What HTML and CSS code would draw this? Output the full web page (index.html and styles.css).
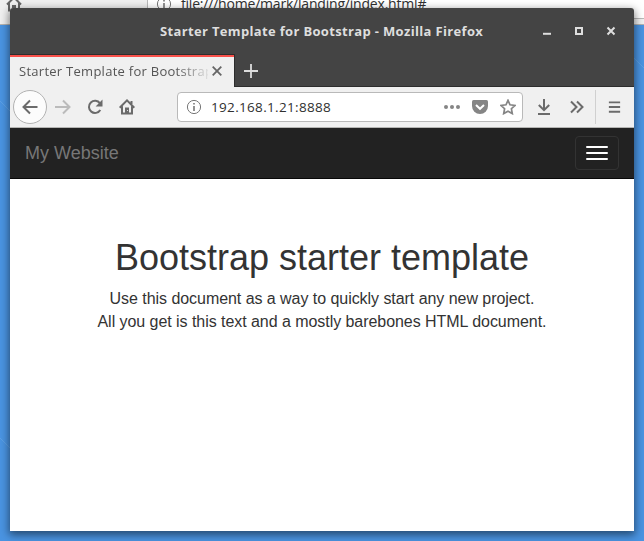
FILE: index.html
```html
<!DOCTYPE html>
<html lang="en">
<head>
<meta charset="utf-8">
<title>Starter Template for Bootstrap</title>
<link rel="stylesheet" href="styles.css">
</head>
<body>
<svg class="texture" viewBox="0 0 644 541"><path d="M0 101l11 11M0 438l12 12M632 56l12 12"/></svg>
<div class="behind">
  <svg class="behind-home" viewBox="0 0 16 16"><path d="M1 8.5 8 1.5l7 7M3 7v7.5h10V7M11.5 5V2"/><path d="M7 14v-4h2v4"/></svg>
  <div class="behind-url">
    <svg class="info" viewBox="0 0 16 16"><circle cx="8" cy="8" r="6.6"/><path d="M8 7v5M8 4v1.6"/></svg>
    <span>file:///home/mark/landing/index.html#</span>
  </div>
</div>
<main class="window">
  <header class="titlebar">
    <span class="title">Starter Template for Bootstrap - Mozilla Firefox</span>
    <svg class="controls" viewBox="0 0 74 12"><path d="M1 8.8h8"/><path d="M34 3h6v6h-6z"/><path d="m65.5 2.5 7 7m0-7-7 7"/></svg>
  </header>
  <div class="tabs">
    <div class="tab">
      <span class="tab-label">Starter Template for Bootstrap</span>
      <svg class="close" viewBox="0 0 10 10"><path d="m.7.7 8.6 8.6m0-8.6L.7 9.3"/></svg>
    </div>
    <svg class="plus" viewBox="0 0 14 14"><path d="M7 0v14M0 7h14"/></svg>
  </div>
  <nav class="toolbar">
    <span class="back"><svg class="icon" viewBox="0 0 16 16"><path d="M15.5 8H1.5M8 1.5 1.5 8 8 14.5"/></svg></span>
    <svg class="icon forward" viewBox="0 0 16 16"><path d="M0 8h14.5M8 1.5 14.5 8 8 14.5"/></svg>
    <svg class="icon reload" viewBox="0 0 16 16"><path d="M13 4.3A6.1 6.1 0 1 0 13.3 11"/><path class="fill" d="M15.5.6v7H8.6z"/></svg>
    <svg class="icon home" viewBox="0 0 16 16"><path d="M.7 8.7 8 1.4l7.3 7.3M3 7.2v7.3h10V7.2M12.5 5V2"/><path class="fill" d="M6 8.5h4V14H6z"/><path class="dot" d="M8 11h1v1H8z"/></svg>
    <div class="url">
      <svg class="info" viewBox="0 0 16 16"><circle cx="8" cy="8" r="6.6"/><path d="M8 7v5M8 4v1.6"/></svg>
      <span class="address">192.168.1.21:8888</span>
      <svg class="icon more" viewBox="0 0 16 16"><circle cx="2" cy="8" r="2"/><circle cx="8" cy="8" r="2"/><circle cx="14" cy="8" r="2"/></svg>
      <svg class="icon pocket" viewBox="0 0 16 16"><path class="fill" d="M1.5 1h13Q16 1 16 2.5V7a8 8 0 0 1-16 0V2.5Q0 1 1.5 1z"/><path class="check" d="m4 6 4 3.8L12 6"/></svg>
      <svg class="icon star" viewBox="0 0 16 16"><path d="m8 1.3 2 4.5 5 .6-3.6 3.3.9 4.9L8 12.2l-4.3 2.4.9-4.9L1 6.4l5-.6z"/></svg>
    </div>
    <svg class="icon download" viewBox="0 0 16 16"><path d="M8 0v11M2.8 6 8 11.2 13.2 6M2 15h12"/></svg>
    <svg class="icon chevrons" viewBox="0 0 16 16"><path d="m2 2.5 5.5 5.5L2 13.5m6-11L13.5 8 8 13.5"/></svg>
    <svg class="icon menu" viewBox="0 0 16 16"><path d="M2 3h12M2 8h12M2 13h12"/></svg>
  </nav>
  <section class="navbar">
    <span class="brand">My Website</span>
    <span class="toggle"><i></i><i></i><i></i></span>
  </section>
  <section class="starter">
    <h1>Bootstrap starter template</h1>
    <p>Use this document as a way to quickly start any new project.<br>All you get is this text and a mostly barebones HTML document.</p>
  </section>
</main>
</body>
</html>
```
FILE: styles.css
```css
* { box-sizing: border-box; }
body {
  margin: 0;
  width: 644px;
  height: 541px;
  overflow: hidden;
  position: relative;
  background: #4a94e2;
  font-family: "Open Sans", "Noto Sans", sans-serif;
}
svg { display: block; flex: none; fill: none; }
.texture { position: absolute; inset: 0; stroke: #5ba0e6; }
.behind {
  position: absolute;
  inset: 0 0 auto;
  height: 25px;
  background: #f0f0f0;
  border-bottom: 1px solid #b5b3b0;
}
.behind-home { position: absolute; left: 6px; top: -4px; width: 16px; height: 16px; stroke: #666; stroke-width: 2; }
.behind-url {
  position: absolute;
  left: 147px;
  right: -4px;
  top: -20px;
  height: 39px;
  border: 1px solid #b9b9b9;
  background: #fff;
  color: #303030;
  font-size: 14px;
  line-height: 20px;
}
.behind-url span { position: absolute; left: 33px; top: 13px; letter-spacing: -.2px; }
.behind-url .info { position: absolute; left: 8px; top: 15px; }
.info { width: 16px; height: 16px; stroke: #777; }
.info path { stroke-width: 1.6; }
.window {
  position: absolute;
  left: 10px;
  top: 8px;
  width: 624px;
  height: 523px;
  display: flex;
  flex-direction: column;
  background: #fff;
  border-radius: 3px 3px 0 0;
  box-shadow: 0 3px 8px 1px rgba(0,0,0,.5);
}
.titlebar {
  height: 46px;
  display: flex;
  align-items: center;
  padding: 0 18px 0 150px;
  background: #444;
  border-radius: 3px 3px 0 0;
}
.title { flex: 1; color: #dedede; font-weight: 700; font-size: 13px; letter-spacing: .34px; white-space: nowrap; }
.controls { width: 74px; height: 12px; stroke: #dedede; stroke-width: 2; }
.tabs {
  height: 33px;
  display: flex;
  align-items: center;
  background: linear-gradient(#2d2d2d, #2d2d2d) 0 100% / 100% 1px no-repeat #444;
}
.tab {
  width: 225px;
  height: 33px;
  display: flex;
  align-items: center;
  padding: 0 12px 0 9px;
  background: #f0f0f0;
  border-top: 1px solid #2d2d2d;
  border-right: 1px solid #2d2d2d;
  box-shadow: inset 0 2px #f9504a;
}
.tab-label {
  width: 189px;
  margin-right: 4px;
  overflow: hidden;
  white-space: nowrap;
  color: #555;
  font-size: 13px;
  letter-spacing: .27px;
  mask-image: linear-gradient(90deg, #000 157px, transparent 193px);
}
.close { width: 10px; height: 10px; stroke: #666; stroke-width: 1.8; }
.plus { width: 14px; height: 14px; margin-left: 9px; stroke: #ddd; stroke-width: 1.8; }
.toolbar {
  height: 41px;
  display: flex;
  align-items: center;
  padding-left: 3px;
  background: #f0f0f0;
  border-bottom: 1px solid #b5b5b3;
}
.icon { width: 16px; height: 16px; stroke: #6b6b6b; stroke-width: 2; }
.icon .fill { fill: #6b6b6b; stroke: none; }
.back {
  width: 34px;
  height: 34px;
  display: grid;
  place-items: center;
  border: 1px solid #b2b2b2;
  border-radius: 50%;
  background: #fcfcfc;
}
.forward { margin-left: 8px; stroke: #bbb; }
.reload { margin-left: 16px; }
.home { margin-left: 16px; }
.home .dot { fill: #ddd; stroke: none; }
.url {
  width: 346px;
  height: 30px;
  display: flex;
  align-items: center;
  margin-left: 42px;
  padding: 0 6px 0 8px;
  background: #fff;
  border: 1px solid #b9b9b9;
  border-radius: 4px;
}
.address { flex: 1; margin-left: 9px; color: #303030; font-size: 13.5px; letter-spacing: .33px; }
.url .icon { stroke: #858585; margin-left: 12px; }
.url .more { fill: #858585; stroke: none; }
.url .pocket .fill { fill: #858585; }
.pocket .check { stroke: #fff; }
.url .star { stroke-width: 1.7; }
.download { margin-left: 13px; }
.chevrons { margin-left: 17px; }
.menu { width: 38px; height: 34px; margin-left: 10px; padding: 9px 11px; border-left: 1px solid #d0d0d0; }
.navbar {
  height: 51px;
  display: flex;
  align-items: center;
  justify-content: space-between;
  padding: 0 15px;
  background: #222;
  border-bottom: 1px solid #080808;
  font-family: "Liberation Sans", sans-serif;
}
.brand { color: #777; font-size: 18px; line-height: 20px; }
.toggle {
  width: 44px;
  height: 34px;
  display: grid;
  align-content: center;
  gap: 4px;
  padding: 0 10px;
  border: 1px solid #333;
  border-radius: 4px;
}
.toggle i { height: 2px; border-radius: 1px; background: #fff; }
.starter {
  padding-top: 59px;
  text-align: center;
  color: #333;
  font-family: "Liberation Sans", sans-serif;
}
h1 { margin: 0 0 10px; font-size: 36px; font-weight: 400; line-height: 40px; }
p { margin: 0; font-size: 16px; line-height: 22.86px; letter-spacing: -.05px; }
```
